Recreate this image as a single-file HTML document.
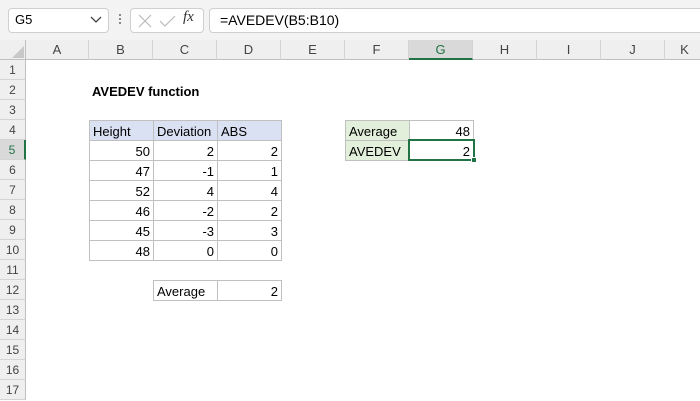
<!DOCTYPE html>
<html><head><style>
body{margin:0;width:700px;height:400px;overflow:hidden;background:#fff;font-family:"Liberation Sans",Arial,sans-serif;position:relative}
.a{position:absolute;box-sizing:border-box}
.t{font-size:13px;line-height:20px;color:#000;white-space:nowrap}
.ch{top:40px;height:20px;font-size:13px;line-height:20px;text-align:center;color:#444;background:#efefef;border-right:1px solid #d4d4d4;border-bottom:1px solid #bfbfbf}
.rh{left:0;width:26px;height:20px;font-size:12px;line-height:21px;text-align:center;color:#444;background:#efefef;border-bottom:1px solid #d4d4d4;border-right:1px solid #bfbfbf}
.c{height:21px;border:1px solid #c0c0c0;font-size:13px;line-height:21px;padding:0 3px}
.r{text-align:right}
</style></head><body>
<div class="a" style="left:0;top:0;width:700px;height:40px;background:#f3f3f3"></div>
<div class="a" style="left:8px;top:8px;width:101px;height:25px;background:#fff;border:1px solid #d0d0d0;border-radius:4px"></div>
<div class="a t" style="left:15px;top:10px">G5</div>
<svg class="a" style="left:90px;top:16px" width="12" height="8"><path d="M1 1 L6 6 L11 1" fill="none" stroke="#444" stroke-width="1.3"/></svg>
<div class="a" style="left:119px;top:14px;width:2px;height:2px;background:#888;box-shadow:0 4px #888,0 8px #888"></div>
<div class="a" style="left:130px;top:8px;width:74px;height:25px;background:#fff;border:1px solid #d0d0d0;border-radius:4px"></div>
<svg class="a" style="left:138px;top:14px" width="60" height="14"><path d="M1 1 L13 13 M13 1 L1 13" stroke="#bbb" stroke-width="1.2"/><path d="M22 7 L27 12 L37 2" fill="none" stroke="#bbb" stroke-width="1.2"/></svg>
<div class="a" style="left:183px;top:9px;font-family:'Liberation Serif',serif;font-style:italic;font-size:15px;color:#333">fx</div>
<div class="a" style="left:209px;top:8px;width:500px;height:25px;background:#fff;border:1px solid #d0d0d0;border-radius:4px"></div>
<div class="a t" style="left:220px;top:10px;font-size:14px">=AVEDEV(B5:B10)</div>

<div class="a" style="left:0;top:40px;width:26px;height:20px;background:#efefef;border-right:1px solid #bfbfbf;border-bottom:1px solid #bfbfbf"></div>
<svg class="a" style="left:12px;top:46px" width="12" height="12"><path d="M12 0 L12 12 L0 12Z" fill="#c8c8c8"/></svg>
<div class="a ch" style="left:26px;width:63px">A</div>
<div class="a ch" style="left:89px;width:64px">B</div>
<div class="a ch" style="left:153px;width:64px">C</div>
<div class="a ch" style="left:217px;width:64px">D</div>
<div class="a ch" style="left:281px;width:64px">E</div>
<div class="a ch" style="left:345px;width:64px">F</div>
<div class="a ch" style="left:409px;width:64px;background:#d9d9d9;color:#217346;border-bottom:2px solid #217346">G</div>
<div class="a ch" style="left:473px;width:64px">H</div>
<div class="a ch" style="left:537px;width:64px">I</div>
<div class="a ch" style="left:601px;width:64px">J</div>
<div class="a ch" style="left:665px;width:40px">K</div>

<div class="a rh" style="top:60px">1</div><div class="a rh" style="top:80px">2</div><div class="a rh" style="top:100px">3</div><div class="a rh" style="top:120px">4</div>
<div class="a rh" style="top:140px;background:#d9d9d9;color:#217346;border-right:2px solid #217346">5</div>
<div class="a rh" style="top:160px">6</div><div class="a rh" style="top:180px">7</div><div class="a rh" style="top:200px">8</div><div class="a rh" style="top:220px">9</div><div class="a rh" style="top:240px">10</div><div class="a rh" style="top:260px">11</div><div class="a rh" style="top:280px">12</div><div class="a rh" style="top:300px">13</div><div class="a rh" style="top:320px">14</div><div class="a rh" style="top:340px">15</div><div class="a rh" style="top:360px">16</div><div class="a rh" style="top:380px">17</div>

<div class="a t" style="left:92px;top:82px;font-weight:bold">AVEDEV function</div>

<div class="a c" style="left:89px;top:120px;width:65px;background:#d9e1f2">Height</div>
<div class="a c" style="left:153px;top:120px;width:65px;background:#d9e1f2">Deviation</div>
<div class="a c" style="left:217px;top:120px;width:65px;background:#d9e1f2">ABS</div>

<div class="a c r" style="left:89px;top:140px;width:65px">50</div><div class="a c r" style="left:153px;top:140px;width:65px">2</div><div class="a c r" style="left:217px;top:140px;width:65px">2</div>
<div class="a c r" style="left:89px;top:160px;width:65px">47</div><div class="a c r" style="left:153px;top:160px;width:65px">-1</div><div class="a c r" style="left:217px;top:160px;width:65px">1</div>
<div class="a c r" style="left:89px;top:180px;width:65px">52</div><div class="a c r" style="left:153px;top:180px;width:65px">4</div><div class="a c r" style="left:217px;top:180px;width:65px">4</div>
<div class="a c r" style="left:89px;top:200px;width:65px">46</div><div class="a c r" style="left:153px;top:200px;width:65px">-2</div><div class="a c r" style="left:217px;top:200px;width:65px">2</div>
<div class="a c r" style="left:89px;top:220px;width:65px">45</div><div class="a c r" style="left:153px;top:220px;width:65px">-3</div><div class="a c r" style="left:217px;top:220px;width:65px">3</div>
<div class="a c r" style="left:89px;top:240px;width:65px">48</div><div class="a c r" style="left:153px;top:240px;width:65px">0</div><div class="a c r" style="left:217px;top:240px;width:65px">0</div>

<div class="a c" style="left:153px;top:280px;width:65px">Average</div><div class="a c r" style="left:217px;top:280px;width:65px">2</div>

<div class="a c" style="left:345px;top:120px;width:65px;background:#e2efda">Average</div><div class="a c r" style="left:409px;top:120px;width:65px">48</div>
<div class="a c" style="left:345px;top:140px;width:65px;background:#e2efda">AVEDEV</div><div class="a c r" style="left:409px;top:140px;width:65px">2</div>
<div class="a" style="left:408px;top:139px;width:67px;height:22px;border:2px solid #217346"></div>
<div class="a" style="left:471px;top:157px;width:6px;height:6px;background:#217346;border:1px solid #fff"></div>
</body></html>
